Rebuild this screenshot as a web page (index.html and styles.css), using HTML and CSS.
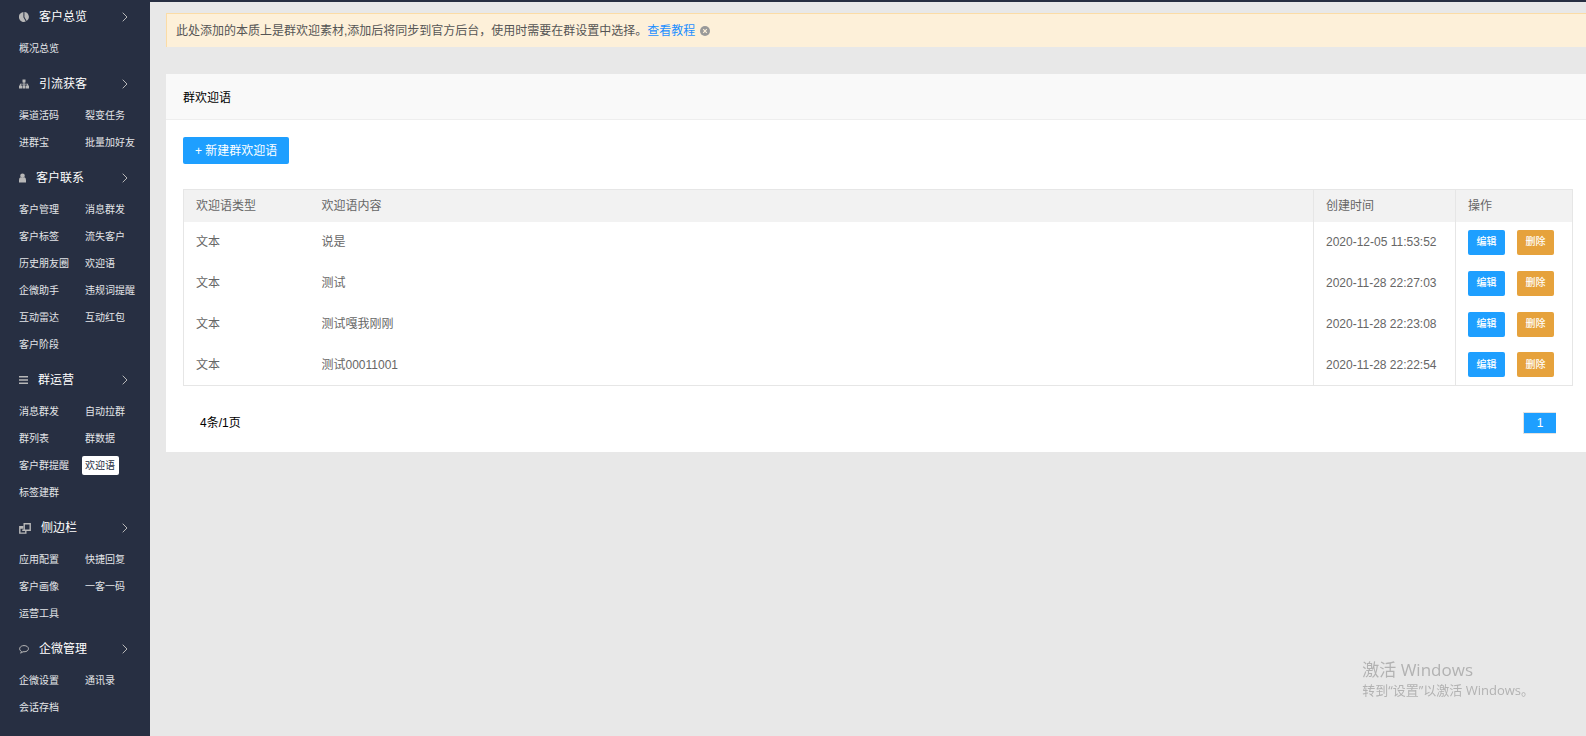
FILE: index.html
```html
<!DOCTYPE html>
<html lang="zh-CN">
<head>
<meta charset="utf-8">
<title>群欢迎语</title>
<link rel="stylesheet" href="styles.css">
</head>
<body>
<svg class="sprite" aria-hidden="true">
  <symbol id="chevron" viewBox="0 0 6 10"><path d="M.7.7 5 5 .7 9.3" fill="none" stroke="currentColor"/></symbol>
</svg>
<div class="layout">
  <nav class="sidebar">
    <section class="group">
      <button class="group-head" type="button">
        <svg width="10" height="10" viewBox="0 0 10 10" fill="currentColor"><path d="M4.4 0v5.2L6.8 9.6A5 5 0 1 1 4.4 0zM5.4 0a5 5 0 0 1 2.3 9.1L5.4 5z"/></svg>
        <span>客户总览</span><svg class="chevron"><use href="#chevron"/></svg>
      </button>
      <ul class="links"><li><a href="#">概况总览</a></li></ul>
    </section>
    <section class="group">
      <button class="group-head" type="button">
        <svg width="10" height="10" viewBox="0 0 10 10" fill="currentColor"><path d="M3.500.5h3v3h-1v1.200h3.600v1.800H10v3H7v-3h1.200v-1H5.500v1h1v3h-3v-3h1v-1H1.800v1H3v3H0v-3h.9V4.700h3.600V3.500h-1z"/></svg>
        <span>引流获客</span><svg class="chevron"><use href="#chevron"/></svg>
      </button>
      <ul class="links">
        <li><a href="#">渠道活码</a></li><li><a href="#">裂变任务</a></li>
        <li><a href="#">进群宝</a></li><li><a href="#">批量加好友</a></li>
      </ul>
    </section>
    <section class="group">
      <button class="group-head" type="button">
        <svg width="7" height="10" viewBox="0 0 7 10" fill="currentColor"><circle cx="3.5" cy="2.7" r="2.3"/><path d="M0 9.500V7q0-2.400 1.400-2.800 2.100 1.500 4.200 0Q7 4.600 7 7v2.500z"/></svg>
        <span>客户联系</span><svg class="chevron"><use href="#chevron"/></svg>
      </button>
      <ul class="links">
        <li><a href="#">客户管理</a></li><li><a href="#">消息群发</a></li>
        <li><a href="#">客户标签</a></li><li><a href="#">流失客户</a></li>
        <li><a href="#">历史朋友圈</a></li><li><a href="#">欢迎语</a></li>
        <li><a href="#">企微助手</a></li><li><a href="#">违规词提醒</a></li>
        <li><a href="#">互动雷达</a></li><li><a href="#">互动红包</a></li>
        <li><a href="#">客户阶段</a></li>
      </ul>
    </section>
    <section class="group">
      <button class="group-head" type="button">
        <svg width="9" height="10" viewBox="0 0 9 10" fill="currentColor"><path d="M0 1h9v1.500H0zM0 4.200h9v1.500H0zM0 7.500h9V9H0z"/></svg>
        <span>群运营</span><svg class="chevron"><use href="#chevron"/></svg>
      </button>
      <ul class="links">
        <li><a href="#">消息群发</a></li><li><a href="#">自动拉群</a></li>
        <li><a href="#">群列表</a></li><li><a href="#">群数据</a></li>
        <li><a href="#">客户群提醒</a></li><li><a class="active" href="#" aria-current="page">欢迎语</a></li>
        <li><a href="#">标签建群</a></li>
      </ul>
    </section>
    <section class="group">
      <button class="group-head" type="button">
        <svg width="12" height="11" viewBox="0 0 12 11" fill="none" stroke="currentColor" stroke-width="1.400"><path d="M5.200.8h6v6.400h-6z"/><path d="M4.500 3.700H.8v6.400h6V8M.8 5h3.500M3.200 7.200h2"/></svg>
        <span>侧边栏</span><svg class="chevron"><use href="#chevron"/></svg>
      </button>
      <ul class="links">
        <li><a href="#">应用配置</a></li><li><a href="#">快捷回复</a></li>
        <li><a href="#">客户画像</a></li><li><a href="#">一客一码</a></li>
        <li><a href="#">运营工具</a></li>
      </ul>
    </section>
    <section class="group">
      <button class="group-head" type="button">
        <svg width="10" height="10" viewBox="0 0 10 10" fill="none" stroke="currentColor"><path d="M2.600 7.600C-1 5.600.7 1.600 5 1.600c5.800 0 6 6.200 0 6.200l-1-.1Q3 8.800 1.500 8.900q.9-.6 1.100-1.300z"/></svg>
        <span>企微管理</span><svg class="chevron"><use href="#chevron"/></svg>
      </button>
      <ul class="links">
        <li><a href="#">企微设置</a></li><li><a href="#">通讯录</a></li>
        <li><a href="#">会话存档</a></li>
      </ul>
    </section>
  </nav>
  <main class="main">
    <div class="notice">
      <p>此处添加的本质上是群欢迎素材,添加后将同步到官方后台，使用时需要在群设置中选择。<a href="#">查看教程</a></p>
      <button class="notice-close" type="button" aria-label="关闭">
        <svg width="10" height="10" viewBox="0 0 10 10"><circle cx="5" cy="5" r="5" fill="#999"/><path d="m3.200 3.200 3.600 3.600m0-3.600L3.200 6.800" stroke="#fdf0d9" stroke-width="1.200"/></svg>
      </button>
    </div>
    <section class="card">
      <h1 class="card-title">群欢迎语</h1>
      <div class="card-body">
        <button class="btn btn-create" type="button">+ 新建群欢迎语</button>
        <table class="table">
          <thead>
            <tr><th class="col-type">欢迎语类型</th><th>欢迎语内容</th><th class="col-time">创建时间</th><th class="col-ops">操作</th></tr>
          </thead>
          <tbody>
            <tr><td>文本</td><td>说是</td><td class="col-time">2020-12-05 11:53:52</td><td class="col-ops"><div class="ops"><button class="btn btn-small" type="button">编辑</button><button class="btn btn-small btn-delete" type="button">删除</button></div></td></tr>
            <tr><td>文本</td><td>测试</td><td class="col-time">2020-11-28 22:27:03</td><td class="col-ops"><div class="ops"><button class="btn btn-small" type="button">编辑</button><button class="btn btn-small btn-delete" type="button">删除</button></div></td></tr>
            <tr><td>文本</td><td>测试嘎我刚刚</td><td class="col-time">2020-11-28 22:23:08</td><td class="col-ops"><div class="ops"><button class="btn btn-small" type="button">编辑</button><button class="btn btn-small btn-delete" type="button">删除</button></div></td></tr>
            <tr><td>文本</td><td>测试00011001</td><td class="col-time">2020-11-28 22:22:54</td><td class="col-ops"><div class="ops"><button class="btn btn-small" type="button">编辑</button><button class="btn btn-small btn-delete" type="button">删除</button></div></td></tr>
          </tbody>
        </table>
        <div class="pager"><span>4条/1页</span><a class="page" href="#" aria-current="page">1</a></div>
      </div>
    </section>
  </main>
</div>
<div class="watermark"><p class="watermark-title">激活 Windows</p><p>转到“设置”以激活 Windows。</p></div>
</body>
</html>
```
FILE: styles.css
```css
* { box-sizing: border-box; }

body {
  margin: 0;
  background: #e8e8e8;
  color: #000;
  font: 12px/18px "Liberation Sans", "Noto Sans CJK SC", sans-serif;
}

button { border: 0; padding: 0; background: none; font: inherit; color: inherit; cursor: pointer; }
a { text-decoration: none; color: inherit; }
p, h1, ul { margin: 0; padding: 0; }
.sprite { position: absolute; width: 0; height: 0; }

.layout { display: flex; min-height: 100vh; }

/* Sidebar */
.sidebar { flex: none; width: 150px; padding: 3px 0 10px; background: #272f42; color: #fff; }
.group { padding-bottom: 8px; }
.group-head {
  display: flex;
  align-items: center;
  gap: 10px;
  width: 100%;
  height: 32px;
  padding: 0 22px 4px 19px;
}
.group-head svg { flex: none; color: #b8b8b8; }
.group-head .chevron { width: 6px; height: 10px; margin-left: auto; }
.links {
  display: grid;
  grid-template-columns: 66px 1fr;
  padding-left: 16px;
  list-style: none;
  font-size: 10px;
  line-height: 19px;
  color: #e3e5e8;
}
.links li { height: 27px; padding: 4px 0; white-space: nowrap; }
.links a { display: inline-block; padding: 0 3px; border-radius: 2px; vertical-align: top; }
.links .active { padding-right: 4px; background: #fff; color: #272f42; }

/* Content */
.main { flex: 1; min-width: 0; padding: 11px 0 16px 16px; border-top: 2px solid #272f42; }
.notice {
  display: flex;
  align-items: center;
  gap: 5px;
  min-height: 34px;
  padding: 0 9px;
  border: 1px solid #fbdca6;
  border-width: 1px 0 0 1px;
  background: #fdf0d9;
  color: #555;
}
.notice a { color: #1e8fff; }
.notice-close { display: flex; }

.card { margin-top: 27px; background: #fff; }
.card-title {
  padding: 15px 17px 12px;
  border-bottom: 1px solid #eee;
  background: #f9f9f9;
  font-size: 12px;
  font-weight: 400;
}
.card-body { padding: 17px 13px 18px 17px; }

.btn { border-radius: 2px; background: #1e9fff; color: #fff; }
.btn-create { display: block; height: 27px; padding: 0 12px; }
.btn-small { width: 37px; height: 25px; font-size: 10px; font-weight: 500; }
.btn-delete { background: #e6a23c; }

.table {
  width: 100%;
  margin-top: 25px;
  border: 1px solid #e6e6e6;
  border-collapse: collapse;
  color: #666;
}
.table th, .table td { padding: 0 12px; text-align: left; font-weight: 400; }
.table th { height: 32px; background: #f2f2f2; }
.table td { height: 41px; }
.table .col-type { width: 126px; }
.table .col-time { width: 142px; border-left: 1px solid #e6e6e6; white-space: nowrap; }
.table .col-ops { width: 117px; border-left: 1px solid #e6e6e6; }
.ops { display: flex; gap: 12px; }

.pager { display: flex; align-items: center; justify-content: space-between; padding: 26px 17px 0; }
.page {
  width: 33px;
  border: 1px solid #e2e2e2;
  border-right: 0;
  background: #1e9fff;
  color: #fff;
  line-height: 20px;
  text-align: center;
}

/* System notice floating over the page */
.watermark {
  position: fixed;
  right: 52px;
  bottom: 37px;
  color: #b2b2b2;
  font: 13px/18px "Open Sans", "Noto Sans CJK SC", sans-serif;
  pointer-events: none;
}
.watermark-title { font-size: 17px; line-height: 22px; }
```
